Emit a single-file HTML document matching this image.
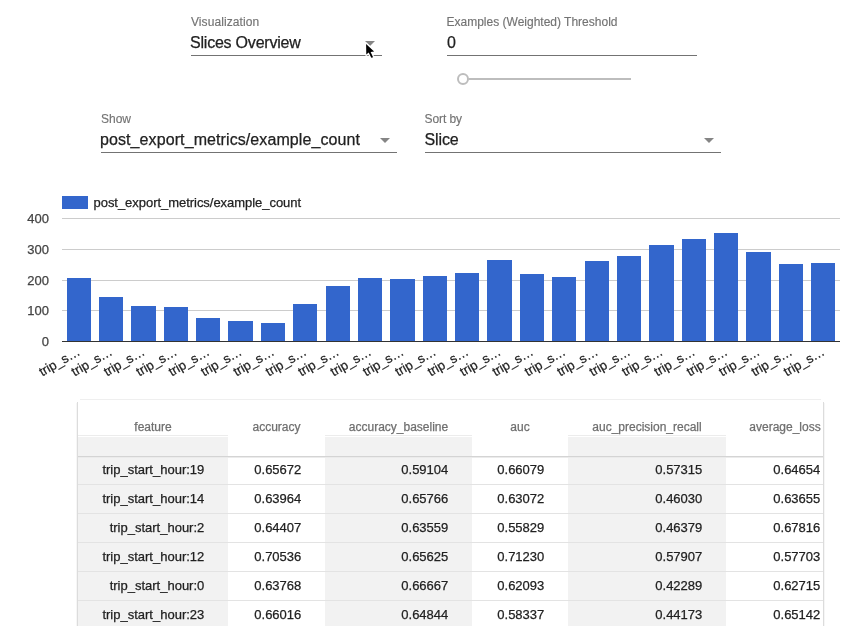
<!DOCTYPE html>
<html><head><meta charset="utf-8"><title>Slices Overview</title>
<style>
html,body{margin:0;padding:0;background:#fff;}
body{width:863px;height:626px;overflow:hidden;position:relative;font-family:"Liberation Sans",sans-serif;}
svg{position:absolute;left:0;top:0;}
#wrap{position:absolute;left:0;top:0;width:863px;height:626px;will-change:transform;}
text{stroke-width:0.25px;}
.val{stroke:#212121;}
.lbl{font-size:12px;fill:#737373;stroke:#737373;stroke-width:0.15px;}
.val{font-size:16px;fill:#212121;}
</style></head>
<body>
<div id="wrap">
<svg width="863" height="626" viewBox="0 0 863 626" font-family="Liberation Sans, sans-serif">
<!-- controls row 1 -->
<g>
<text class="lbl" x="191" y="26" textLength="68.2">Visualization</text>
<text class="val" x="190" y="48" textLength="110.8">Slices Overview</text>
<rect x="191" y="55" width="191" height="1" fill="#737373"/>
<polygon points="365,41 375,41 370,46" fill="#858585"/>
</g>
<g>
<text class="lbl" x="446.5" y="26">Examples (Weighted) Threshold</text>
<text class="val" x="447" y="48">0</text>
<rect x="447" y="55" width="250" height="1" fill="#737373"/>
<rect x="468.5" y="78" width="162.5" height="2" fill="#bdbdbd"/>
<circle cx="463" cy="79" r="5" fill="#fff" stroke="#bdbdbd" stroke-width="2"/>
</g>
<!-- controls row 2 -->
<g>
<text class="lbl" x="101" y="123">Show</text>
<text class="val" x="100" y="145" textLength="260">post_export_metrics/example_count</text>
<rect x="101" y="152" width="296" height="1" fill="#737373"/>
<polygon points="380,138 390,138 385,143" fill="#858585"/>
</g>
<g>
<text class="lbl" x="424.5" y="123" textLength="37.5">Sort by</text>
<text class="val" x="424.5" y="145" textLength="34.2">Slice</text>
<rect x="425" y="152" width="296" height="1" fill="#737373"/>
<polygon points="704,138 714,138 709,143" fill="#858585"/>
</g>
<!-- chart -->
<g>
<rect x="62" y="196" width="26" height="13" fill="#3366cc"/>
<text x="93.5" y="207" font-size="13" fill="#222" stroke="#222" stroke-width="0.25" textLength="207.6">post_export_metrics/example_count</text>
<g fill="#cccccc">
<rect x="62" y="218" width="778" height="1"/>
<rect x="62" y="249" width="778" height="1"/>
<rect x="62" y="280" width="778" height="1"/>
<rect x="62" y="310" width="778" height="1"/>
</g>
<g font-size="13" fill="#444" stroke="#444" stroke-width="0.25" text-anchor="end">
<text x="49" y="222.7">400</text>
<text x="49" y="253.5">300</text>
<text x="49" y="284.5">200</text>
<text x="49" y="315">100</text>
<text x="49" y="346">0</text>
</g>
<g fill="#3366cc">
<rect x="67" y="278" width="24" height="63"/><rect x="99" y="297" width="24" height="44"/><rect x="131" y="306" width="25" height="35"/><rect x="164" y="307" width="24" height="34"/><rect x="196" y="318" width="24" height="23"/><rect x="228" y="321" width="25" height="20"/><rect x="261" y="323" width="24" height="18"/><rect x="293" y="304" width="24" height="37"/><rect x="326" y="286" width="24" height="55"/><rect x="358" y="278" width="24" height="63"/><rect x="390" y="279" width="25" height="62"/><rect x="423" y="276" width="24" height="65"/><rect x="455" y="273" width="24" height="68"/><rect x="487" y="260" width="25" height="81"/><rect x="520" y="274" width="24" height="67"/><rect x="552" y="277" width="24" height="64"/><rect x="585" y="261" width="24" height="80"/><rect x="617" y="256" width="24" height="85"/><rect x="649" y="245" width="25" height="96"/><rect x="682" y="239" width="24" height="102"/><rect x="714" y="233" width="24" height="108"/><rect x="746" y="252" width="25" height="89"/><rect x="779" y="264" width="24" height="77"/><rect x="811" y="263" width="24" height="78"/>
</g>
<rect x="62" y="341" width="778" height="1" fill="#333"/>
<g font-size="13" fill="#222" stroke="#222" stroke-width="0.25" text-anchor="end">
<text x="80.98" y="354.2" transform="rotate(-30 80.98 354.2)">trip_s…</text><text x="113.36" y="354.2" transform="rotate(-30 113.36 354.2)">trip_s…</text><text x="145.74" y="354.2" transform="rotate(-30 145.74 354.2)">trip_s…</text><text x="178.11" y="354.2" transform="rotate(-30 178.11 354.2)">trip_s…</text><text x="210.49" y="354.2" transform="rotate(-30 210.49 354.2)">trip_s…</text><text x="242.86" y="354.2" transform="rotate(-30 242.86 354.2)">trip_s…</text><text x="275.24" y="354.2" transform="rotate(-30 275.24 354.2)">trip_s…</text><text x="307.61" y="354.2" transform="rotate(-30 307.61 354.2)">trip_s…</text><text x="339.99" y="354.2" transform="rotate(-30 339.99 354.2)">trip_s…</text><text x="372.36" y="354.2" transform="rotate(-30 372.36 354.2)">trip_s…</text><text x="404.74" y="354.2" transform="rotate(-30 404.74 354.2)">trip_s…</text><text x="437.11" y="354.2" transform="rotate(-30 437.11 354.2)">trip_s…</text><text x="469.49" y="354.2" transform="rotate(-30 469.49 354.2)">trip_s…</text><text x="501.86" y="354.2" transform="rotate(-30 501.86 354.2)">trip_s…</text><text x="534.23" y="354.2" transform="rotate(-30 534.23 354.2)">trip_s…</text><text x="566.61" y="354.2" transform="rotate(-30 566.61 354.2)">trip_s…</text><text x="598.98" y="354.2" transform="rotate(-30 598.98 354.2)">trip_s…</text><text x="631.36" y="354.2" transform="rotate(-30 631.36 354.2)">trip_s…</text><text x="663.73" y="354.2" transform="rotate(-30 663.73 354.2)">trip_s…</text><text x="696.11" y="354.2" transform="rotate(-30 696.11 354.2)">trip_s…</text><text x="728.48" y="354.2" transform="rotate(-30 728.48 354.2)">trip_s…</text><text x="760.86" y="354.2" transform="rotate(-30 760.86 354.2)">trip_s…</text><text x="793.23" y="354.2" transform="rotate(-30 793.23 354.2)">trip_s…</text><text x="825.61" y="354.2" transform="rotate(-30 825.61 354.2)">trip_s…</text>
</g>
</g>
<!-- table -->
<g>
<rect x="80" y="399" width="741" height="1" fill="#efefef"/>
<rect x="76" y="403" width="1" height="223" fill="#f6f6f6"/><rect x="77" y="402" width="1" height="224" fill="#dcdcdc"/>
<rect x="823" y="402" width="1" height="224" fill="#dcdcdc"/><rect x="824" y="403" width="1" height="223" fill="#f6f6f6"/>
<svg x="78" y="400" width="745" height="226" viewBox="78 400 745 226" overflow="hidden">
<rect x="78" y="435" width="150" height="1" fill="#ececec"/><rect x="78" y="437" width="150" height="19" fill="#f2f2f2"/><rect x="78" y="458" width="150" height="200" fill="#f2f2f2"/><rect x="325" y="435" width="147" height="1" fill="#ececec"/><rect x="325" y="437" width="147" height="19" fill="#f2f2f2"/><rect x="325" y="458" width="147" height="200" fill="#f2f2f2"/><rect x="568" y="435" width="158" height="1" fill="#ececec"/><rect x="568" y="437" width="158" height="19" fill="#f2f2f2"/><rect x="568" y="458" width="158" height="200" fill="#f2f2f2"/><rect x="78" y="456" width="745" height="1" fill="#d4d4d4"/><rect x="78" y="457" width="745" height="1" fill="#ebebeb"/><rect x="78" y="484" width="745" height="1" fill="#e3e3e3"/><rect x="78" y="513" width="745" height="1" fill="#e3e3e3"/><rect x="78" y="542" width="745" height="1" fill="#e3e3e3"/><rect x="78" y="571" width="745" height="1" fill="#e3e3e3"/><rect x="78" y="600" width="745" height="1" fill="#e3e3e3"/>
<g font-size="12" fill="#6f6f6f" stroke="#6f6f6f" stroke-width="0.3"><text x="153.0" y="431" text-anchor="middle">feature</text><text x="276.5" y="431" text-anchor="middle">accuracy</text><text x="398.5" y="431" text-anchor="middle">accuracy_baseline</text><text x="520.0" y="431" text-anchor="middle">auc</text><text x="647.0" y="431" text-anchor="middle">auc_precision_recall</text><text x="785.0" y="431" text-anchor="middle">average_loss</text></g>
<g font-size="13" fill="#212121" stroke="#212121" stroke-width="0.25"><text x="204.3" y="474" text-anchor="end">trip_start_hour:19</text><text x="301.3" y="474" text-anchor="end">0.65672</text><text x="448.3" y="474" text-anchor="end">0.59104</text><text x="544.3" y="474" text-anchor="end">0.66079</text><text x="702.3" y="474" text-anchor="end">0.57315</text><text x="820.3" y="474" text-anchor="end">0.64654</text><text x="204.3" y="503" text-anchor="end">trip_start_hour:14</text><text x="301.3" y="503" text-anchor="end">0.63964</text><text x="448.3" y="503" text-anchor="end">0.65766</text><text x="544.3" y="503" text-anchor="end">0.63072</text><text x="702.3" y="503" text-anchor="end">0.46030</text><text x="820.3" y="503" text-anchor="end">0.63655</text><text x="204.3" y="532" text-anchor="end">trip_start_hour:2</text><text x="301.3" y="532" text-anchor="end">0.64407</text><text x="448.3" y="532" text-anchor="end">0.63559</text><text x="544.3" y="532" text-anchor="end">0.55829</text><text x="702.3" y="532" text-anchor="end">0.46379</text><text x="820.3" y="532" text-anchor="end">0.67816</text><text x="204.3" y="561" text-anchor="end">trip_start_hour:12</text><text x="301.3" y="561" text-anchor="end">0.70536</text><text x="448.3" y="561" text-anchor="end">0.65625</text><text x="544.3" y="561" text-anchor="end">0.71230</text><text x="702.3" y="561" text-anchor="end">0.57907</text><text x="820.3" y="561" text-anchor="end">0.57703</text><text x="204.3" y="590" text-anchor="end">trip_start_hour:0</text><text x="301.3" y="590" text-anchor="end">0.63768</text><text x="448.3" y="590" text-anchor="end">0.66667</text><text x="544.3" y="590" text-anchor="end">0.62093</text><text x="702.3" y="590" text-anchor="end">0.42289</text><text x="820.3" y="590" text-anchor="end">0.62715</text><text x="204.3" y="619" text-anchor="end">trip_start_hour:23</text><text x="301.3" y="619" text-anchor="end">0.66016</text><text x="448.3" y="619" text-anchor="end">0.64844</text><text x="544.3" y="619" text-anchor="end">0.58337</text><text x="702.3" y="619" text-anchor="end">0.44173</text><text x="820.3" y="619" text-anchor="end">0.65142</text></g>
</svg>
</g>
<!-- cursor -->
<g>
<path d="M366.1,44 L366.3,54.6 L368.7,52.4 L371.3,57.8 L373.1,57.2 L370.6,51.9 L374.1,51.5 Z" fill="#fff" stroke="#fff" stroke-width="2.6" stroke-linejoin="round"/>
<path d="M366.1,44 L366.3,54.6 L368.7,52.4 L371.3,57.8 L373.1,57.2 L370.6,51.9 L374.1,51.5 Z" fill="#000"/>
</g>
</svg>
</div>
</body></html>
